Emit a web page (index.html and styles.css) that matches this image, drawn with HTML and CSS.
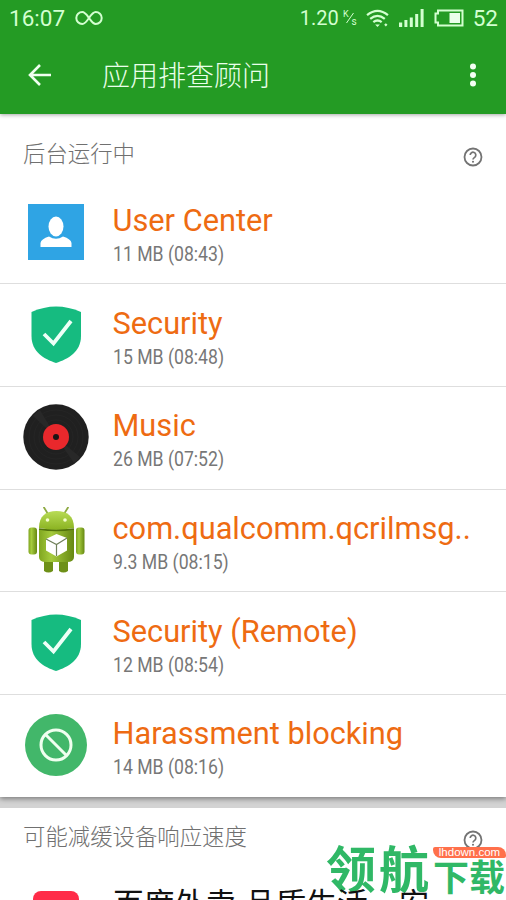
FILE: index.html
```html
<!DOCTYPE html>
<html lang="zh-CN">
<head>
<meta charset="utf-8">
<title>应用排查顾问</title>
<link rel="stylesheet" href="styles.css">
</head>
<body>
<svg class="defs" width="0" height="0" aria-hidden="true">
  <defs>
    <linearGradient id="droid" x1="0" x2="1"><stop offset="0" stop-color="#80a620"/><stop offset=".35" stop-color="#a5cb3d"/><stop offset="1" stop-color="#668812"/></linearGradient>
    <linearGradient id="droid-head" x1="0" x2="0" y1="0" y2="1"><stop offset="0" stop-color="#b8dc56"/><stop offset="1" stop-color="#8bb322"/></linearGradient>
    <symbol id="help" viewBox="0 0 20 20"><circle cx="10" cy="10" r="8.5" fill="none" stroke="#737373" stroke-width="1.8"/><path d="M7.2 8a2.8 2.8 0 1 1 4.7 2.1C10.7 11 10 11.4 10 12.6" fill="none" stroke="#737373" stroke-width="1.7"/><circle cx="10" cy="14.7" r="1.05" fill="#737373"/></symbol>
    <symbol id="shield" viewBox="0 0 66 66"><path d="M8.500 10Q33 -1 58 10V34C58 50 45 57 33 61C21 57 8.500 50 8.500 34Z" fill="#16bb80"/><path d="M21 32L30.500 41.500L48 19" fill="none" stroke="#edfff7" stroke-width="3.800"/></symbol>
  </defs>
</svg>
<div class="screen">
  <header class="top">
    <div class="status">
      <span class="time">16:07</span>
      <svg class="infinity" viewBox="0 0 28 16"><path d="M14 8C11.500 4.500 10 2 7.300 2a6 6 0 0 0 0 12C10 14 12 11 14 8S18 2 20.700 2a6 6 0 0 1 0 12C18 14 16.500 11.500 14 8Z" fill="none" stroke="#d3ffd0" stroke-width="2"/></svg>
      <span class="speed">1.20</span>
      <svg class="unit" viewBox="0 0 15 18"><text x="0" y="8">K</text><path d="M3.500 14L10.500 4" stroke="#d3ffd0" stroke-width="1"/><text x="8.500" y="15.500" class="unit-s">s</text></svg>
      <svg class="wifi" viewBox="0 0 24 20" fill="none" stroke="#d3ffd0" stroke-width="2.400"><path d="M1 6.500Q12 -2.500 23 6.500M4.300 10.300Q12 4.200 19.700 10.300M7.600 13.900Q12 10.300 16.400 13.900"/><path d="M9.500 16.200h5L12 19ZM19 16.500l1.800-1.500 1.700 1.500-1.700 2Z" fill="#d3ffd0" stroke="none"/></svg>
      <svg class="signal" viewBox="0 0 26 18" fill="#d3ffd0"><path d="M0 13.500h3.200V18H0zM5.400 11h3v7h-3zM10.800 8.500h3V18h-3zM16.200 5h3v13h-3zM21.600 0h3v18h-3z"/></svg>
      <svg class="battery" viewBox="0 0 30 18"><path d="M4 1.500h24.500v15H4V13.500H1.500V4.500H4Z" fill="none" stroke="#d3ffd0" stroke-width="2"/><path d="M15.500 4h10.500v10H15.500z" fill="#eaffea"/></svg>
      <span class="level">52</span>
    </div>
    <div class="bar">
      <svg class="back" viewBox="0 0 24 22" fill="none" stroke="#efffef" stroke-width="2.600"><path d="M23 11H2M12 1L2 11L12 21"/></svg>
      <h1>应用排查顾问</h1>
      <svg class="more" viewBox="0 0 8 24" fill="#f4fff4"><circle cx="4" cy="3.500" r="3"/><circle cx="4" cy="12" r="3"/><circle cx="4" cy="20.500" r="3"/></svg>
    </div>
  </header>
  <section class="card">
    <div class="section-head"><h2>后台运行中</h2><svg class="help"><use href="#help"/></svg></div>
    <ul>
      <li>
        <svg class="icon" viewBox="0 0 66 66"><path d="M5 5h56v56H5z" fill="#2fa4e4"/><ellipse cx="33" cy="27.500" rx="7.500" ry="10" fill="#fff"/><path d="M17.500 48V44Q18 40 26 37.500Q33 42 40 37.500Q48 40 48.500 44V48Z" fill="#fff"/></svg>
        <div class="info"><span class="name">User Center</span><span class="meta">11 MB (08:43)</span></div>
      </li>
      <li>
        <svg class="icon"><use href="#shield"/></svg>
        <div class="info"><span class="name">Security</span><span class="meta">15 MB (08:48)</span></div>
      </li>
      <li>
        <svg class="icon" viewBox="0 0 66 66"><circle cx="33" cy="33" r="32.700" fill="#202020"/><path d="M33 33L10 12A31 31 0 0 1 17 6ZM33 33L57 53A31 31 0 0 1 51 59Z" fill="#282828"/><g fill="none" stroke="#292929" stroke-width=".6"><circle cx="33" cy="33" r="27"/><circle cx="33" cy="33" r="22"/><circle cx="33" cy="33" r="17"/></g><circle cx="33" cy="33" r="13" fill="#e9282c"/><circle cx="33" cy="33" r="3" fill="#1c1515"/></svg>
        <div class="info"><span class="name">Music</span><span class="meta">26 MB (07:52)</span></div>
      </li>
      <li>
        <svg class="icon" viewBox="0 0 66 66"><path d="M25 7L21 .500M41 7L45 .500" stroke="#8eaa43" stroke-width="1.800" stroke-linecap="round"/><path d="M21 49h9v15q-4.500 3-9 0ZM36 49h9v15q-4.500 3-9 0Z" fill="#6e9018"/><rect x="5.500" y="20.500" width="8.500" height="27" rx="3" fill="url(#droid)"/><rect x="53" y="20.500" width="8.500" height="27" rx="3" fill="url(#droid)"/><path d="M16 22h35v28q0 5-7 5H23q-7 0-7-5Z" fill="url(#droid)"/><path d="M16 21C16 9 23 4 33.500 4S51 9 51 21Q33 24 16 21Z" fill="url(#droid-head)"/><path d="M16 22Q33 25 51 22" fill="none" stroke="#52730b" stroke-width="1.300"/><circle cx="24.500" cy="13" r="1.800" fill="#f5ffce"/><circle cx="42" cy="13" r="1.800" fill="#f5ffce"/><path d="M33.500 27L44 31V43.500L33.500 49.500L23 43.500V32Z" fill="#fff"/><path d="M23 32L33.500 37.500L44 31M33.500 37.500V49" fill="none" stroke="#70805a" stroke-width="1.200"/></svg>
        <div class="info"><span class="name">com.qualcomm.qcrilmsg..</span><span class="meta">9.3 MB (08:15)</span></div>
      </li>
      <li>
        <svg class="icon"><use href="#shield"/></svg>
        <div class="info"><span class="name">Security (Remote)</span><span class="meta">12 MB (08:54)</span></div>
      </li>
      <li>
        <svg class="icon" viewBox="0 0 66 66"><circle cx="33" cy="33" r="31" fill="#42b76a"/><g fill="none" stroke="#efffef" stroke-width="3"><circle cx="33" cy="33" r="15"/><path d="M22.500 22.500L43.500 43.500"/></g></svg>
        <div class="info"><span class="name">Harassment blocking</span><span class="meta">14 MB (08:16)</span></div>
      </li>
    </ul>
  </section>
  <section class="card second">
    <div class="section-head"><h2>可能减缓设备响应速度</h2><svg class="help"><use href="#help"/></svg></div>
    <div class="app"><span class="app-icon"></span><span class="app-name">百度外卖-品质生活・安</span></div>
  </section>
  <div class="watermark">
    <span class="wm-main">领航</span>
    <div class="wm-side"><span class="wm-site">lhdown.com</span><span class="wm-sub">下载</span></div>
  </div>
</div>
</body>
</html>
```

FILE: styles.css
```css
* { box-sizing: border-box; }
body { margin: 0; font-family: Roboto, "Noto Sans CJK SC", sans-serif; }
h1, h2, ul { margin: 0; padding: 0; }
h1, h2 { font-weight: 300; }
.defs { position: absolute; }
svg { display: block; flex: none; }
.screen { position: relative; width: 506px; height: 900px; overflow: hidden; background: #d3d3d3; }
.top { position: relative; height: 114px; background: #249b24; color: #d3ffd0; box-shadow: 0 1px 4px rgba(0, 0, 0, .35); }
.status { display: flex; align-items: center; height: 36px; padding: 0 8px 0 9px; font-size: 22.500px; }
.time { width: 66px; }
.infinity { width: 28px; height: 16px; }
.speed { margin-left: auto; font-size: 20px; }
.unit { width: 15px; height: 18px; margin: 0 8px 0 4px; fill: #d3ffd0; font-size: 9px; }
.unit-s { font-size: 10px; }
.wifi { width: 23px; height: 19px; }
.signal { width: 26px; height: 18px; margin-left: 10px; }
.battery { width: 30px; height: 18px; margin: 0 9px; }
.bar { display: flex; align-items: center; height: 78px; padding: 0 29px 0 28px; }
.back { width: 24px; height: 22px; }
h1 { margin: 3px 0 0 50px; color: #eaffea; font-size: 28px; line-height: 40px; }
.more { width: 8px; height: 24px; margin-left: auto; }
.card { height: 683px; background: #fff; box-shadow: 0 2px 5px rgba(0, 0, 0, .4); }
.section-head { display: flex; justify-content: space-between; height: 67px; padding: 23px 23px 0; }
h2 { color: #707070; font-size: 22.400px; line-height: 34px; }
.help { width: 20px; height: 20px; margin-top: 10px; }
ul { list-style: none; }
li { display: flex; height: 102.700px; padding: 17.500px 23px 0; }
li:first-child { height: 102.200px; padding-top: 18px; }
li + li { border-top: 1px solid #dedede; }
.icon { width: 66px; height: 66px; }
.info { display: flex; flex-direction: column; align-items: flex-start; margin-left: 23.500px; white-space: nowrap; }
.name { height: 43px; color: #ee6b12; font-size: 30.750px; line-height: 43px; }
.meta { color: #777; font-size: 20px; line-height: 24px; transform: scaleX(.882); transform-origin: left; }
.second { margin-top: 11px; height: 120px; box-shadow: none; }
.second .section-head { padding-top: 12px; }
.second .help { margin-top: 10px; }
.app { display: flex; padding: 0 33px; }
.app-icon { width: 46px; height: 46px; margin-top: 16px; border-radius: 8px; background: #ff2c48; }
.app-name { position: relative; z-index: 1; margin: 8px 0 0 34px; color: #111; font-size: 30.800px; line-height: 44px; white-space: nowrap; }
.watermark { position: absolute; left: 326px; top: 840px; display: flex; width: 180px; color: #30b866; font-family: "Noto Sans CJK SC", sans-serif; font-weight: 700; }
.wm-main { width: 107px; font-size: 50px; line-height: 52px; letter-spacing: 3px; }
.wm-side { padding-top: 7px; }
.wm-site { display: block; width: 73px; height: 11px; border-radius: 2px 8px 2px 8px; background: #ff704b; color: #fff; font: 11.500px/11px "Liberation Sans", sans-serif; text-align: center; }
.wm-sub { display: block; font-size: 36px; line-height: 34px; white-space: nowrap; }
```
